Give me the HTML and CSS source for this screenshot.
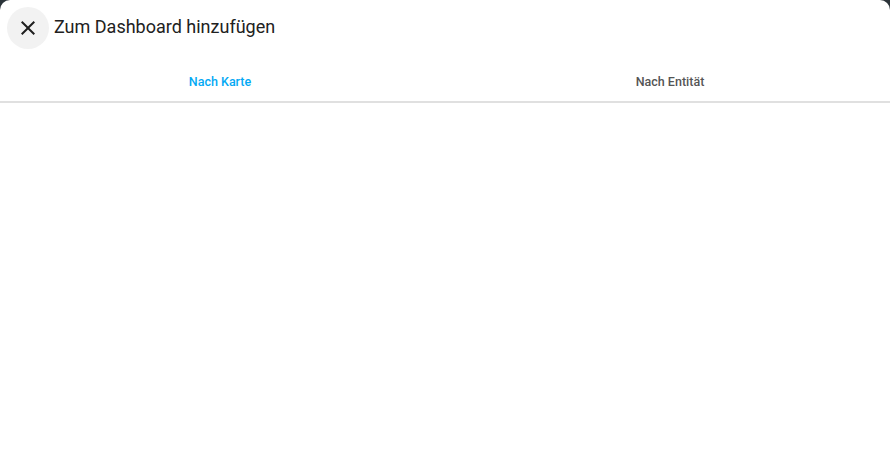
FILE: index.html
```html
<!DOCTYPE html>
<html>
  <head>
    <meta charset="utf-8" />
    <meta name="viewport" content="width=device-width, initial-scale=1" />
    <link rel="stylesheet" href="styles.css">
  </head>

  <body>
    <div class="dialog">
      <div class="header">
        <button class="close" aria-label="Schließen">
          <svg viewBox="0 0 24 24" width="24" height="24"><path d="M19,6.41L17.59,5L12,10.59L6.41,5L5,6.41L10.59,12L5,17.59L6.41,19L12,13.41L17.59,19L19,17.59L13.41,12L19,6.41Z"/></svg>
        </button>
        <h1 class="title">Zum Dashboard hinzufügen</h1>
      </div>
      <div class="tabs">
        <div class="tab active">Nach Karte</div>
        <div class="tab">Nach Entität</div>
      </div>
      <div class="content"></div>
    </div>
  </body>
</html>
```

FILE: styles.css
```css
html,
body {
  margin: 0;
  height: 100%;
}
body {
  background: #2b3339;
  font-family: Roboto, "Noto Sans", sans-serif;
  overflow: hidden;
}
.dialog {
  background: #fff;
  border-radius: 10px 10px 0 0;
  height: 100%;
  display: flex;
  flex-direction: column;
}
.header {
  display: flex;
  align-items: center;
  height: 56px;
  padding-left: 7px;
  gap: 5px;
}
.close {
  width: 42px;
  height: 42px;
  border: 0;
  border-radius: 50%;
  background: #f2f2f2;
  display: flex;
  align-items: center;
  justify-content: center;
  padding: 0;
}
.close svg {
  fill: #1f1f1f;
}
.title {
  margin: 0 0 4px;
  font-size: 18px;
  font-weight: 400;
  color: #212121;
}
.tabs {
  display: flex;
  margin-top: 6px;
  border-bottom: 2px solid #e0e0e0;
}
.tab {
  flex: 1;
  height: 39px;
  display: flex;
  align-items: center;
  justify-content: center;
  padding-left: 8px;
  font-size: 12.5px;
  font-weight: 500;
  color: #555;
}
.tab.active {
  padding: 0 2px 0 0;
  color: #03a9f4;
}
.content {
  flex: 1;
}
```
